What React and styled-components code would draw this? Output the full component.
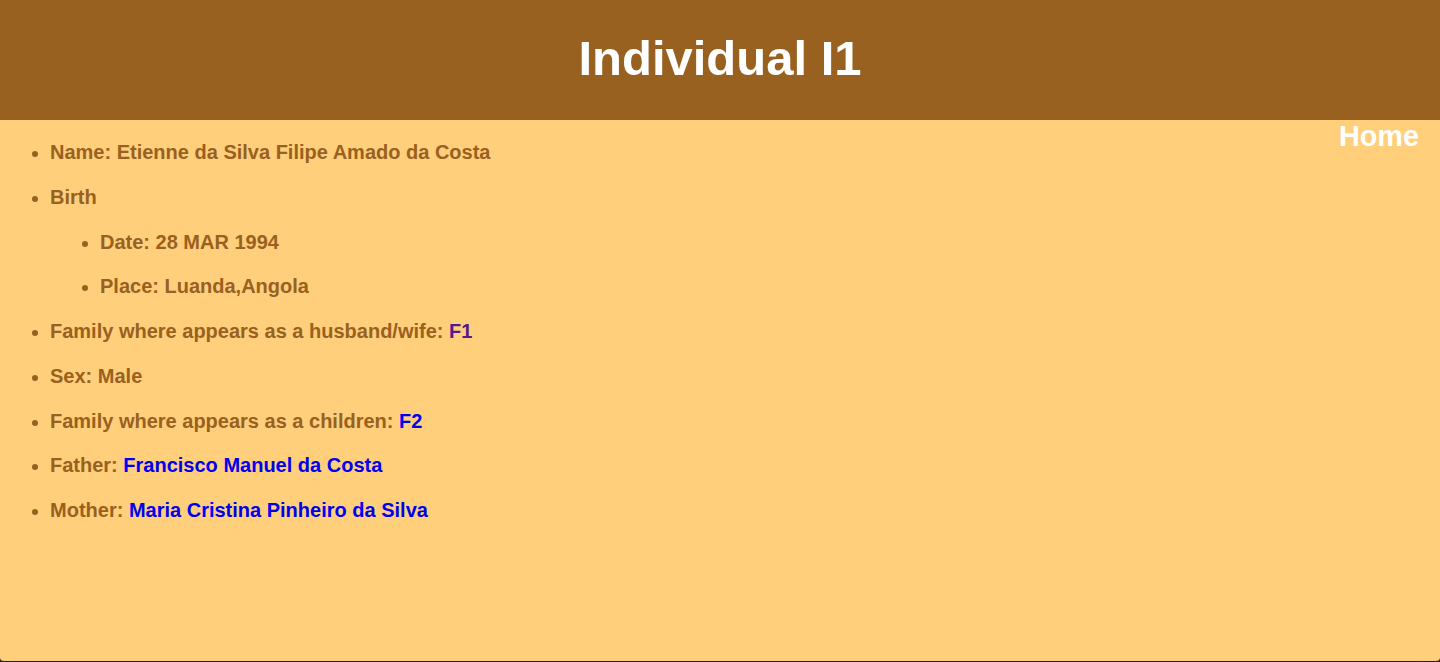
import React from 'react';
import styled, { createGlobalStyle } from 'styled-components';

const GlobalStyle = createGlobalStyle`
  html, body {
    margin: 0;
    padding: 0;
    background: #1e1e1e;
  }
  body {
    font-family: "Liberation Sans", Arial, Helvetica, sans-serif;
  }
`;

const Page = styled.div`
  height: 662px;
  box-sizing: border-box;
  display: flex;
  flex-direction: column;
  background: #ffcf7c;
  border-bottom: 1px solid #1e1e1e;
  border-radius: 0 0 4px 4px;
  overflow: hidden;
`;

const Header = styled.header`
  height: 120px;
  flex-shrink: 0;
  display: flex;
  align-items: center;
  justify-content: center;
  background: #99611f;
  padding-bottom: 4px;
  box-sizing: border-box;
`;

const Title = styled.h1`
  margin: 0;
  font-size: 49px;
  font-weight: bold;
  color: #ffffff;
`;

const Main = styled.main`
  flex: 1;
  display: flex;
  justify-content: space-between;
  align-items: flex-start;
  padding-right: 21px;
`;

const HomeLink = styled.a`
  font-size: 28.8px;
  font-weight: bold;
  color: #ffffff;
  text-decoration: none;
`;

const List = styled.ul`
  margin: ${p => (p.$nested ? '21.75px 0 0' : '21px 0 0')};
  padding-left: 50px;
  list-style: disc;
`;

const Item = styled.li`
  font-size: 20px;
  line-height: 23px;
  font-weight: bold;
  color: #99611f;
  margin-bottom: 21.75px;

  &::marker {
    font-size: 19px;
  }
`;

const Ref = styled.a`
  color: ${p => (p.$visited ? '#551a8b' : '#0000ee')};
  text-decoration: none;
`;

export default function App() {
  return (
    <>
      <GlobalStyle />
      <Page>
        <Header>
          <Title>Individual I1</Title>
        </Header>
        <Main>
          <List>
            <Item>Name: Etienne da Silva Filipe Amado da Costa</Item>
            <Item>
              Birth
              <List $nested>
                <Item>Date: 28 MAR 1994</Item>
                <Item style={{ marginBottom: 0 }}>Place: Luanda,Angola</Item>
              </List>
            </Item>
            <Item>
              Family where appears as a husband/wife: <Ref $visited href="#">F1</Ref>
            </Item>
            <Item>Sex: Male</Item>
            <Item>
              Family where appears as a children: <Ref href="#">F2</Ref>
            </Item>
            <Item>
              Father: <Ref href="#">Francisco Manuel da Costa</Ref>
            </Item>
            <Item>
              Mother: <Ref href="#">Maria Cristina Pinheiro da Silva</Ref>
            </Item>
          </List>
          <HomeLink href="#">Home</HomeLink>
        </Main>
      </Page>
    </>
  );
}
